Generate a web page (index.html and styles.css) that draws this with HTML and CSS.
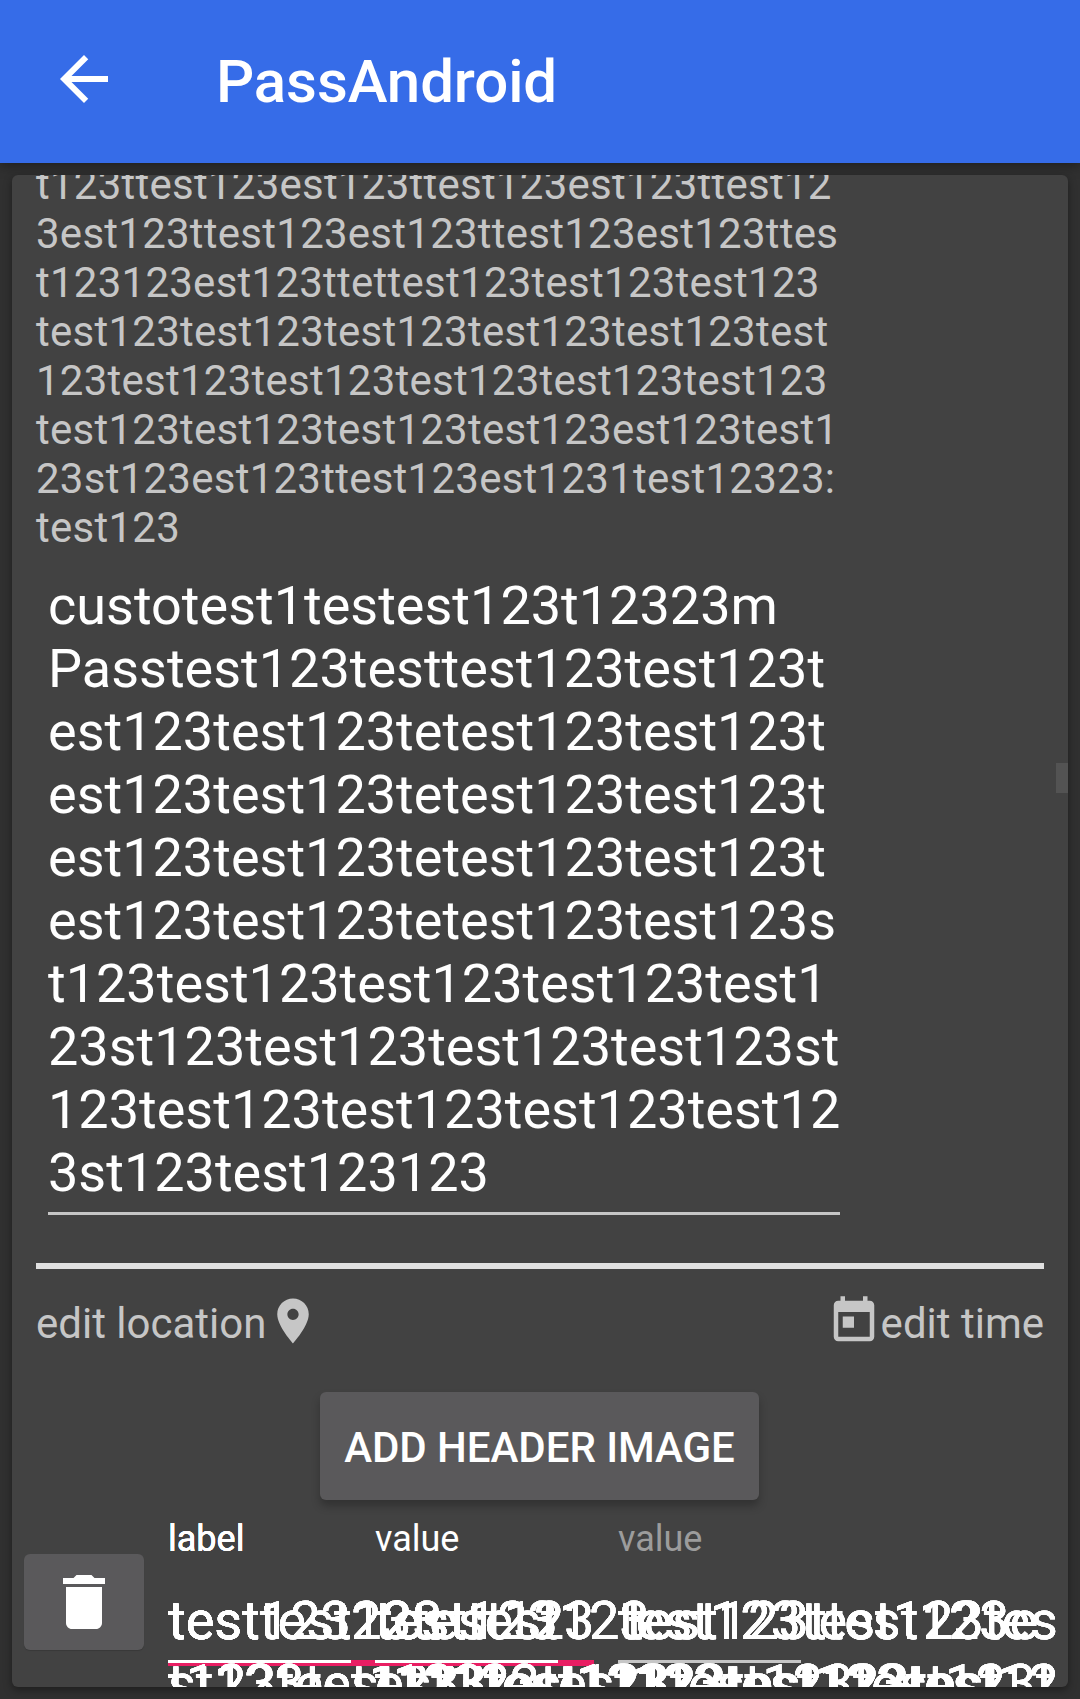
FILE: index.html
```html
<!DOCTYPE html>
<html lang="en">
<head>
<meta charset="utf-8">
<title>PassAndroid</title>
<link rel="stylesheet" href="styles.css">
</head>
<body>
<header class="toolbar">
  <svg class="back" viewBox="0 0 24 24"><path d="M20 11H7.83l5.59-5.59L12 4l-8 8 8 8 1.41-1.41L7.83 13H20v-2z"/></svg>
  <h1 class="title">PassAndroid</h1>
</header>
<main class="card">
  <div class="scrollbar"></div>
  <p class="summary">t123ttest123est123ttest123est123ttest12<br>3est123ttest123est123ttest123est123ttes<br>t123123est123ttettest123test123test123<br>test123test123test123test123test123test<br>123test123test123test123test123test123<br>test123test123test123test123est123test1<br>23st123est123ttest123est1231test12323:<br>test123</p>
  <div class="description">custotest1testest123t12323m<br>Passtest123testtest123test123t<br>est123test123tetest123test123t<br>est123test123tetest123test123t<br>est123test123tetest123test123t<br>est123test123tetest123test123s<br>t123test123test123test123test1<br>23st123test123test123test123st<br>123test123test123test123test12<br>3st123test123123</div>
  <hr class="divider">
  <div class="actions">
    <div class="action"><span>edit location</span><svg class="icon" viewBox="0 0 24 24"><path d="M12 2C8.13 2 5 5.13 5 9c0 5.25 7 13 7 13s7-7.75 7-13c0-3.87-3.13-7-7-7zm0 9.5c-1.38 0-2.5-1.12-2.5-2.5s1.12-2.5 2.5-2.5 2.5 1.12 2.5 2.5-1.12 2.5-2.5 2.5z"/></svg></div>
    <div class="action"><svg class="icon" viewBox="0 0 24 24"><path d="M19 3h-1V1h-2v2H8V1H6v2H5c-1.11 0-1.99.9-1.99 2L3 19c0 1.1.89 2 2 2h14c1.1 0 2-.9 2-2V5c0-1.1-.9-2-2-2zm0 16H5V8h14v11zM7 10h5v5H7z"/></svg><span>edit time</span></div>
  </div>
  <button class="header-image">ADD HEADER IMAGE</button>
  <section class="fields">
    <button class="delete" aria-label="Delete"><svg viewBox="0 0 24 24"><path d="M6 19c0 1.1.9 2 2 2h8c1.1 0 2-.9 2-2V7H6v12zM19 4h-3.5l-1-1h-5l-1 1H5v2h14V4z"/></svg></button>
    <div class="columns">
      <div class="field">
        <span class="hint strong">label</span>
        <div class="inputs">
          <i class="line accent wide"></i><i class="line"></i>
          <div class="input">test12323test123<br>t123test123</div>
          <div class="input">testtest123<br>st123test123test123test123test123t</div>
        </div>
      </div>
      <div class="field">
        <span class="hint">value</span>
        <div class="inputs">
          <i class="line accent"></i><i class="line"></i>
          <div class="input">test123<br>t123test123</div>
          <div class="input">testtest123<br>est123test123test123test12</div>
        </div>
      </div>
      <div class="field">
        <span class="hint dim">value</span>
        <div class="inputs">
          <i class="line grey"></i>
          <div class="input">test123test123tes<br>t123test123test</div>
          <div class="input inset">test123ttest123e</div>
        </div>
      </div>
    </div>
  </section>
</main>
</body>
</html>
```
FILE: styles.css
```css
* { box-sizing: border-box; }
body { margin: 0; height: 1699px; overflow: hidden; background: #303030; font-family: Roboto, sans-serif; color: #fff; }
svg { fill: currentColor; display: block; }
.toolbar { height: 163px; background: #366ce8; display: flex; align-items: center; padding: 0 48px; gap: 96px; box-shadow: 0 2px 12px rgba(0,0,0,.4); }
.back { width: 72px; height: 72px; margin-bottom: 6px; }
.title { margin: 0; font-size: 60px; font-weight: 500; letter-spacing: -.1px; }
.card { position: relative; margin: 12px 12px 0; height: 1512px; background: #424242; border-radius: 6px; overflow: hidden; box-shadow: 0 3px 9px rgba(0,0,0,.4); }
.scrollbar { position: absolute; right: 0; top: 588px; width: 12px; height: 30px; background: #535353; }
.summary { margin: -15px 24px 0; font-size: 42px; line-height: 49px; letter-spacing: .25px; color: #c6c6c6; white-space: nowrap; }
.description { margin: 22px 0 0 36px; width: 792px; height: 641px; font-size: 54px; line-height: 63px; white-space: nowrap; border-bottom: 3px solid #c6c6c6; }
.divider { margin: 48px 24px 0; height: 6px; border: 0; background: #e0e0e0; }
.actions { display: flex; justify-content: space-between; margin: 24px 24px 0; height: 60px; font-size: 42px; color: #c6c6c6; }
.action { display: flex; align-items: center; }
.icon { width: 54px; height: 54px; margin-bottom: 4px; }
.header-image { display: block; margin: 39px 0 0 308px; padding: 2px 0 0; width: 439px; height: 108px; border: 0; border-radius: 6px; background: #5a595b; color: #fff; font: 500 42px Roboto, sans-serif; letter-spacing: -.05px; white-space: nowrap; box-shadow: 0 6px 8px rgba(0,0,0,.25); }
.fields { display: flex; gap: 24px; padding-left: 12px; }
.delete { flex: none; display: flex; align-items: center; justify-content: center; width: 120px; height: 96px; margin-top: 54px; padding: 0; border: 0; border-radius: 6px; background: #5a595b; color: #fff; box-shadow: 0 1px 1px rgba(0,0,0,.15); }
.delete svg { width: 72px; height: 72px; }
.columns { display: grid; grid-template-columns: 207px 243px 1fr; flex: 1; padding-top: 18px; }
.hint { display: block; height: 71px; font-size: 36px; line-height: 42px; }
.strong { text-shadow: 0 0 #fff, 0 0 #fff, 0 0 #fff; }
.dim { color: #9c9c9c; }

/* Several inputs share each cell and are drawn over one another. */
.inputs { position: relative; height: 126px; }
.input { position: absolute; left: 0; top: 0; font-size: 54px; line-height: 63px; white-space: nowrap; text-shadow: 0 0 #fff, 0 0 #fff, 0 0 #fff; }
.inset { padding-left: 8px; }
.line { position: absolute; left: 0; top: 71px; width: 183px; height: 3px; background: #fff; }
.line.accent { width: 219px; height: 6px; background: #e91e63; }
.line.wide { width: 207px; }
.line.grey { background: #c6c6c6; }
```
